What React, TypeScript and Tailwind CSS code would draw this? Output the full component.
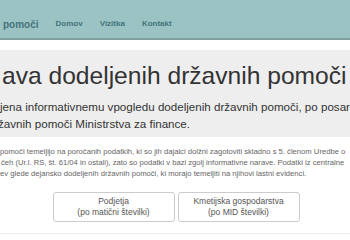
export default function App() {
  return (
    <div className="w-[350px] h-[240px] overflow-hidden bg-white font-['Liberation_Sans',Arial,sans-serif]">
      <nav className="h-[40px] bg-[#9cc3c3] border-b-2 border-[#7f9f9f] flex items-center pl-[3px] pt-[10px]">
        <span className="text-[10px] font-bold text-[#41737b]">pomoči</span>
        <div className="flex gap-[17px] ml-[17px] text-[8px] font-bold text-[#41737b]">
          <span>Domov</span>
          <span>Vizitka</span>
          <span>Kontakt</span>
        </div>
      </nav>
      <div className="mt-[10px] bg-[#eeeeee] h-[87px] pt-[12px] whitespace-nowrap text-[#333]">
        <h1 className="text-[24.6px] leading-[28px] pl-[2px]">ava dodeljenih državnih pomoči</h1>
        <p className="mt-[8px] text-[11.6px] leading-[17px]">
          jena informativnemu vpogledu dodeljenih državnih pomoči, po posar
          <br />
          <span className="inline-block -ml-[2px]">žavnih pomoči Ministrstva za finance.</span>
        </p>
      </div>
      <div className="pt-[9px] whitespace-nowrap text-[7.65px] leading-[11px] text-[#666]">
        <p>pomoči temeljijo na poročanih podatkih, ki so jih dajalci dolžni zagotoviti skladno s 5. členom Uredbe o</p>
        <p className="pl-[1px]">čeh (Ur.l. RS, št. 61/04 in ostali), zato so podatki v bazi zgolj informativne narave. Podatki iz centralne</p>
        <p>ev glede dejansko dodeljenih državnih pomoči, ki morajo temeljiti na njihovi lastni evidenci.</p>
      </div>
      <div className="mt-[13px] flex justify-center gap-[3px] pl-[2px]">
        <button className="w-[122px] h-[30px] border border-[#cccccc] rounded-[3px] bg-white text-[8.5px] leading-[11px] text-[#555]">
          Podjetja
          <br />
          (po matični številki)
        </button>
        <button className="w-[122px] h-[30px] border border-[#cccccc] rounded-[3px] bg-white text-[8.5px] leading-[11px] text-[#555]">
          Kmetijska gospodarstva
          <br />
          (po MID številki)
        </button>
      </div>
      <div className="mt-[11px] border-t border-[#eeeeee]" />
    </div>
  );
}
